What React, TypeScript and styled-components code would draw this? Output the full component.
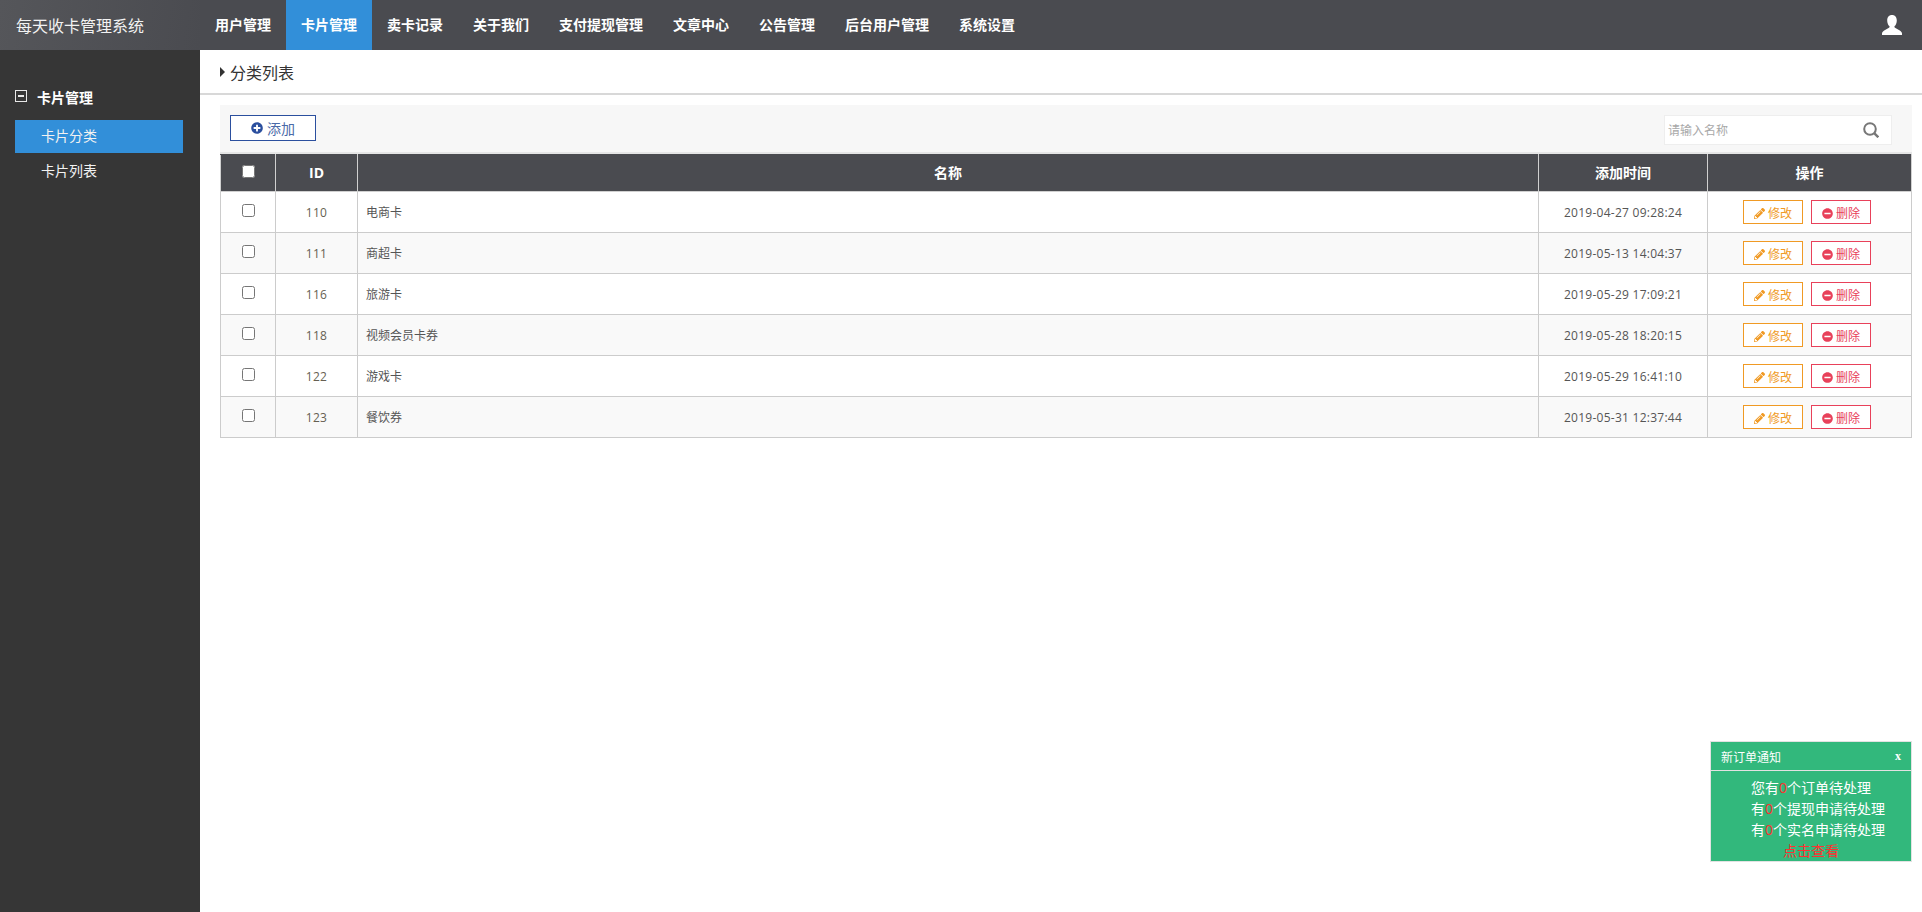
import React from 'react';
import styled, { createGlobalStyle } from 'styled-components';
import { FaPencilAlt, FaPlusCircle, FaMinusCircle } from 'react-icons/fa';

const Global = createGlobalStyle`
  html, body { margin: 0; padding: 0; height: 100%; background: #fff; }
  body { font-family: "Open Sans", "Noto Sans CJK SC", sans-serif; font-size: 12px; color: #555; }
  * { box-sizing: border-box; }
`;

const Page = styled.div`
  width: 100%;
  height: 100vh;
  display: flex;
  flex-direction: column;
  overflow: hidden;
`;

const TopBar = styled.header`
  height: 50px;
  flex: none;
  display: flex;
  background: #4a4b50;
`;

const Logo = styled.div`
  width: 200px;
  flex: none;
  padding: 0 0 1px 16px;
  display: flex;
  align-items: center;
  font-size: 16px;
  color: #f2f2f2;
  background: linear-gradient(100deg, #55565a, #4a4b50);
`;

const Nav = styled.nav`
  display: flex;
  flex: 1;
`;

const NavItem = styled.a<{ $active?: boolean }>`
  padding: 0 15px 2px;
  display: flex;
  align-items: center;
  font-size: 14px;
  font-weight: 700;
  color: #fff;
  background: ${p => (p.$active ? '#328fd9' : 'transparent')};
`;

const UserSlot = styled.div`
  width: 40px;
  flex: none;
  display: flex;
  align-items: center;
`;

const Body = styled.div`
  flex: 1;
  display: flex;
  min-height: 0;
`;

const Sidebar = styled.aside`
  width: 200px;
  flex: none;
  background: #363636;
  padding: 37px 17px 0 15px;
`;

const GroupTitle = styled.div`
  display: flex;
  align-items: center;
  gap: 10px;
  height: 20px;
  font-size: 14px;
  font-weight: 700;
  color: #fff;
  margin-bottom: 13px;
`;

const MinusBox = styled.span`
  width: 12px;
  height: 12px;
  border: 1px solid #e8e8e8;
  position: relative;
  margin-top: -3px;
  &::after {
    content: '';
    position: absolute;
    left: 2px;
    right: 2px;
    top: 4px;
    height: 2px;
    background: #e8e8e8;
  }
`;

const MenuItem = styled.a<{ $active?: boolean }>`
  display: flex;
  align-items: center;
  height: 33px;
  padding: 0 0 3px 26px;
  margin-bottom: 2px;
  font-size: 14px;
  color: #f2f2f2;
  background: ${p => (p.$active ? '#328fd9' : 'transparent')};
`;

const Main = styled.main`
  flex: 1;
  min-width: 0;
`;

const TitleBar = styled.div`
  height: 45px;
  display: flex;
  align-items: center;
  padding-left: 20px;
  gap: 5px;
  border-bottom: 2px solid #d8d8d8;
  font-size: 16px;
  color: #333;
`;

const Caret = styled.span`
  width: 0;
  height: 0;
  border-left: 5px solid #333;
  border-top: 5px solid transparent;
  border-bottom: 5px solid transparent;
`;

const Content = styled.div`
  padding: 10px 10px 0 20px;
`;

const Toolbar = styled.div`
  height: 49px;
  padding: 10px 20px 0 10px;
  display: flex;
  align-items: flex-start;
  justify-content: space-between;
  background: #f7f7f7;
  border-bottom: 2px solid #e6e6e6;
`;

const AddButton = styled.a`
  width: 86px;
  height: 26px;
  display: flex;
  align-items: center;
  justify-content: center;
  gap: 4px;
  background: #fff;
  border: 1px solid #2b4f9e;
  color: #4a6aa8;
  font-size: 14px;
  svg { color: #2b4f9e; font-size: 12px; }
`;

const Search = styled.div`
  width: 228px;
  height: 30px;
  display: flex;
  align-items: center;
  justify-content: space-between;
  padding: 0 12px 0 3px;
  background: #fff;
  border: 1px solid #eee;
`;

const SearchInput = styled.input`
  flex: 1;
  min-width: 0;
  border: 0;
  outline: 0;
  padding: 0;
  background: transparent;
  font: inherit;
  font-size: 12px;
  &::placeholder { color: #a8a8a8; opacity: 1; }
`;

const Table = styled.table`
  width: 100%;
  table-layout: fixed;
  border-collapse: collapse;
`;

const HeadCell = styled.th`
  height: 37px;
  padding: 0 0 2px;
  background: #4a4b50;
  color: #fff;
  font-size: 14px;
  font-weight: 700;
  text-align: center;
  border: 1px solid #d0d0d0;
  border-top-color: #4a4b50;
`;

const Row = styled.tr`
  &:nth-child(even) td { background: #f9f9f9; }
`;

const Cell = styled.td<{ $left?: boolean }>`
  height: 41px;
  padding: ${p => (p.$left ? '0 0 0 8px' : '0')};
  font-size: 12px;
  color: #555;
  text-align: ${p => (p.$left ? 'left' : 'center')};
  border: 1px solid #ccc;
`;

const IdText = styled.span`
  color: #665f52;
  letter-spacing: 0.25px;
`;

const DateText = styled.span`
  letter-spacing: 0.26px;
`;

const Check = styled.input<{ $head?: boolean }>`
  width: 13px;
  height: 13px;
  margin: 0 0 ${p => (p.$head ? '4px' : '4px')};
  vertical-align: middle;
`;

const Actions = styled.div`
  display: flex;
  justify-content: center;
  gap: 8px;
  padding-right: 5px;
`;

const ActionButton = styled.a<{ $color: string }>`
  width: 60px;
  height: 24px;
  padding-top: 2px;
  display: flex;
  align-items: center;
  justify-content: center;
  gap: 3px;
  font-size: 12px;
  background: #fff;
  color: ${p => p.$color};
  border: 1px solid ${p => p.$color};
  svg { font-size: 11px; }
`;

const Notice = styled.aside`
  position: fixed;
  left: 1710px;
  top: 741px;
  width: 202px;
  height: 121px;
  background: #32b87c;
  border: 1px solid #e2e2e2;
  color: #fff;
`;

const NoticeHead = styled.div`
  height: 29px;
  display: flex;
  align-items: center;
  justify-content: space-between;
  padding: 1px 10px 0 10px;
  font-size: 12px;
  border-bottom: 1px solid #e2e2e2;
`;

const CloseMark = styled.span`
  font-family: "Liberation Serif", serif;
  font-weight: 700;
  font-size: 12px;
`;

const NoticeBody = styled.div`
  padding-top: 6px;
  font-size: 14px;
  line-height: 21px;
`;

const NoticeLine = styled.div`
  padding-left: 40px;
`;

const Red = styled.span`
  color: #ff3030;
`;

const NoticeLink = styled.div`
  text-align: center;
  color: #ff3030;
`;

const navItems = ['用户管理', '卡片管理', '卖卡记录', '关于我们', '支付提现管理', '文章中心', '公告管理', '后台用户管理', '系统设置'];

const rows = [
  ['110', '电商卡', '2019-04-27 09:28:24'],
  ['111', '商超卡', '2019-05-13 14:04:37'],
  ['116', '旅游卡', '2019-05-29 17:09:21'],
  ['118', '视频会员卡券', '2019-05-28 18:20:15'],
  ['122', '游戏卡', '2019-05-29 16:41:10'],
  ['123', '餐饮券', '2019-05-31 12:37:44'],
];

const UserIcon = () => (
  <svg width="20" height="20" viewBox="0 0 20 20" fill="#fff">
    <path d="M10 0c3 0 4.8 2.2 4.8 5.4 0 2.300-.9 4.500-2.100 5.700-.5.500-.4 1.300.3 1.700l4.800 2.600c1.400.8 2.200 1.800 2.200 3.200V20H0v-1.400c0-1.400.8-2.400 2.200-3.200L7 12.800c.7-.4.8-1.200.3-1.700C6.100 9.900 5.200 7.700 5.200 5.400 5.200 2.200 7 0 10 0z" />
  </svg>
);

const SearchIcon = () => (
  <svg width="16" height="16" viewBox="0 0 16 16" fill="none" stroke="#777" strokeWidth="2">
    <circle cx="7" cy="7" r="5.800" />
    <path d="M11.200 11.200L15.300 15.300" strokeWidth="2.400" />
  </svg>
);

export default function App() {
  return (
    <Page>
      <Global />
      <TopBar>
        <Logo>每天收卡管理系统</Logo>
        <Nav>
          {navItems.map(n => (
            <NavItem key={n} $active={n === '卡片管理'}>{n}</NavItem>
          ))}
        </Nav>
        <UserSlot><UserIcon /></UserSlot>
      </TopBar>
      <Body>
        <Sidebar>
          <GroupTitle><MinusBox />卡片管理</GroupTitle>
          <MenuItem $active>卡片分类</MenuItem>
          <MenuItem>卡片列表</MenuItem>
        </Sidebar>
        <Main>
          <TitleBar><Caret />分类列表</TitleBar>
          <Content>
            <Toolbar>
              <AddButton><FaPlusCircle />添加</AddButton>
              <Search>
                <SearchInput placeholder="请输入名称" />
                <SearchIcon />
              </Search>
            </Toolbar>
            <Table>
              <colgroup>
                <col width="55" />
                <col width="82" />
                <col />
                <col width="169" />
                <col width="204" />
              </colgroup>
              <thead>
                <tr>
                  <HeadCell><Check $head type="checkbox" /></HeadCell>
                  <HeadCell>ID</HeadCell>
                  <HeadCell>名称</HeadCell>
                  <HeadCell>添加时间</HeadCell>
                  <HeadCell>操作</HeadCell>
                </tr>
              </thead>
              <tbody>
                {rows.map(r => (
                  <Row key={r[0]}>
                    <Cell><Check type="checkbox" /></Cell>
                    <Cell><IdText>{r[0]}</IdText></Cell>
                    <Cell $left>{r[1]}</Cell>
                    <Cell><DateText>{r[2]}</DateText></Cell>
                    <Cell>
                      <Actions>
                        <ActionButton $color="#f09a24"><FaPencilAlt />修改</ActionButton>
                        <ActionButton $color="#e8415a"><FaMinusCircle />删除</ActionButton>
                      </Actions>
                    </Cell>
                  </Row>
                ))}
              </tbody>
            </Table>
          </Content>
        </Main>
      </Body>
      <Notice>
        <NoticeHead>新订单通知<CloseMark>x</CloseMark></NoticeHead>
        <NoticeBody>
          <NoticeLine>您有<Red>0</Red>个订单待处理</NoticeLine>
          <NoticeLine>有<Red>0</Red>个提现申请待处理</NoticeLine>
          <NoticeLine>有<Red>0</Red>个实名申请待处理</NoticeLine>
          <NoticeLink>点击查看</NoticeLink>
        </NoticeBody>
      </Notice>
    </Page>
  );
}
